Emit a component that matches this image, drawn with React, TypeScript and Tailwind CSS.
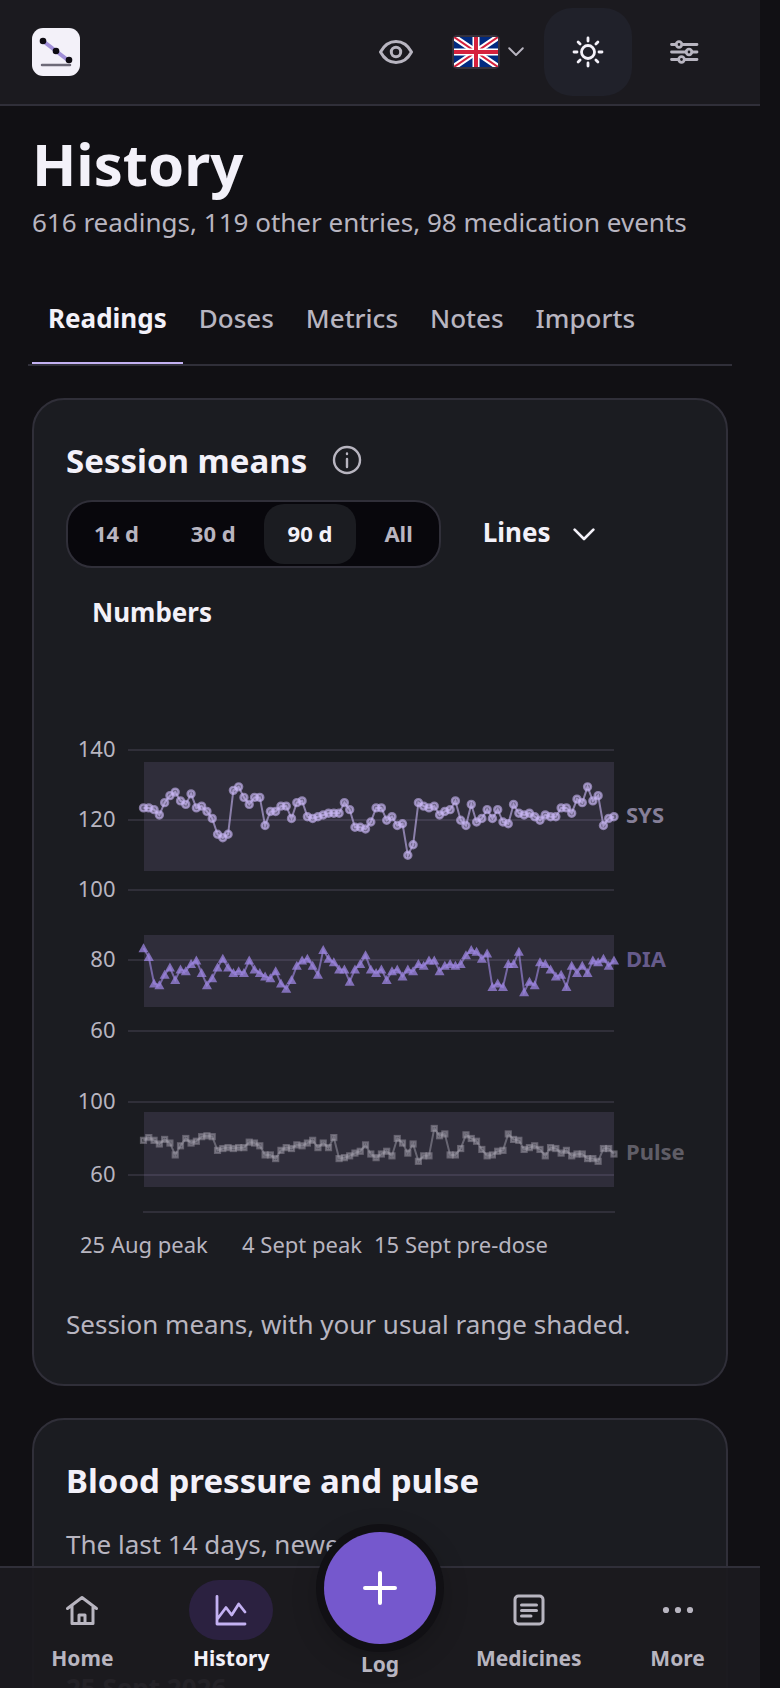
import { useState } from "react";
import type { ReactNode } from "react";

const sys = [
  123.5, 123.5, 123, 121.5, 125, 127, 128, 125.5, 124.5, 127.5, 123.5, 124, 122.5, 120.5, 116,
  115, 116, 128.5, 129.5, 126.5, 124.5, 126.5, 126.5, 118.5, 122.5, 122.5, 124, 124, 120.5, 125,
  125.5, 121, 120.5, 121, 121.5, 122, 122, 122, 125, 123, 118, 118, 117.5, 119.5, 123.5,
  123.5, 120, 121, 118.5, 119, 110, 113, 125, 124, 123.5, 124, 121.5, 122.5, 123, 125.5,
  120, 118.5, 124.5, 119.5, 120.5, 123, 120.5, 123, 119.5, 119, 124.5, 122, 121.5, 122, 121,
  120, 121.5, 121, 121, 123.5, 123.5, 122, 126, 125, 129.5, 125.5, 127, 118.5, 120.5, 121,
];

const dia = [
  83.5, 81, 73.5, 73, 76, 78, 74.5, 77.5, 77, 79, 80, 76.5, 73, 75, 78,
  80.5, 78, 76.5, 77, 76.5, 80, 77.5, 76.5, 75.5, 75, 77, 73.5, 72, 74.5, 78.5,
  80, 80.5, 78.5, 76, 83, 80.5, 79.5, 77.5, 77.5, 74, 77.5, 79, 81.5, 77.5, 76.5,
  77.5, 74.5, 77, 77.5, 75.5, 77.5, 77, 79, 78.5, 80, 80, 77, 78.5, 79, 78.5,
  79, 81.5, 83, 82.5, 80.5, 82, 72.5, 73.5, 72.5, 79, 79, 82.5, 71, 74, 73,
  79.5, 79, 77.5, 75.5, 76, 72.5, 78.5, 76.5, 78.5, 76.5, 80, 79.5, 80.5, 78.5, 80,
];

const pulse = [
  79, 80.5, 79, 77, 79.5, 77.5, 71, 76, 80, 77.5, 78.5, 81, 81.5, 81, 73.5,
  74.5, 75, 74.5, 75, 75, 78, 77.5, 76, 71, 71, 69, 73.5, 75, 74.5, 76.5,
  76, 77.5, 79, 75, 77.5, 75, 80.5, 69, 69.5, 70.5, 72, 73, 76.5, 71.5, 69.5,
  71.5, 73, 70.5, 80, 77.5, 72, 77, 67.5, 70.5, 70.5, 85.5, 81.5, 82.5, 71, 71,
  74.5, 82, 80, 78.5, 74, 70.5, 71, 73, 73.5, 82.5, 79.5, 79, 74, 75, 76,
  74, 70.5, 75, 74.5, 72, 73.5, 70.5, 71.5, 71.5, 69, 69, 67.5, 74.5, 74.5, 71.5,
];

const LEFT = 77.5;
const RIGHT = 548;

const xAt = (i: number) => LEFT + (i * (RIGHT - LEFT)) / 89;
const pressureY = (v: number) => 82 + (140 - v) * 3.51;
const pulseY = (v: number) => 434 + (100 - v) * 1.825;

const toPoints = (values: number[], y: (v: number) => number) =>
  values.map((v, i) => `${xAt(i)},${y(v)}`).join(" ");

const gridLines = [
  { label: "140", y: 82 },
  { label: "120", y: 152 },
  { label: "100", y: 222 },
  { label: "80", y: 292 },
  { label: "60", y: 363 },
  { label: "100", y: 434 },
  { label: "60", y: 507 },
];

const bands = [
  { y: 94, height: 109 },
  { y: 267, height: 72 },
  { y: 444, height: 75 },
];

function SessionChart() {
  return (
    <svg
      viewBox="0 0 628 612"
      className="mt-6 block w-full"
      role="img"
      aria-label="Session means over 90 days"
      fontSize={22}
    >
      {gridLines.map((g, i) => (
        <g key={i}>
          <line x1={62} x2={RIGHT} y1={g.y} y2={g.y} stroke="#302f39" strokeWidth={2} />
          <text x={49.5} y={g.y + 7} textAnchor="end" fill="#b8b5c0">
            {g.label}
          </text>
        </g>
      ))}
      {bands.map((b) => (
        <rect key={b.y} x={78} y={b.y} width={470} height={b.height} fill="#b9a0e8" fillOpacity={0.13} />
      ))}
      <line x1={77} x2={549} y1={544} y2={544} stroke="#302f39" strokeWidth={2} />

      <polyline points={toPoints(sys, pressureY)} fill="none" stroke="#c9b8f5" strokeWidth={2} opacity={0.6} />
      {sys.map((v, i) => (
        <circle
          key={i}
          cx={xAt(i)}
          cy={pressureY(v)}
          r={3.5}
          fill="#c9b8f5"
          fillOpacity={0.45}
          stroke="#c9b8f5"
          strokeWidth={2.4}
          strokeOpacity={0.6}
        />
      ))}

      <polyline points={toPoints(dia, pressureY)} fill="none" stroke="#9480d2" strokeWidth={2} opacity={0.7} />
      {dia.map((v, i) => {
        const x = xAt(i);
        const y = pressureY(v);
        return (
          <path key={i} d={`M${x} ${y - 5}L${x + 5} ${y + 4}H${x - 5}Z`} fill="#9d86e2" fillOpacity={0.75} />
        );
      })}

      <polyline points={toPoints(pulse, pulseY)} fill="none" stroke="#a29fab" strokeWidth={2} opacity={0.5} />
      {pulse.map((v, i) => (
        <rect
          key={i}
          x={xAt(i) - 2.5}
          y={pulseY(v) - 2.5}
          width={5}
          height={5}
          fill="#a29fab"
          fillOpacity={0.3}
          stroke="#a29fab"
          strokeWidth={2.2}
          strokeOpacity={0.48}
        />
      ))}

      <g fontWeight={700}>
        <text x={560} y={155} fill="#857f98">SYS</text>
        <text x={560} y={299} fill="#665b8b">DIA</text>
        <text x={560} y={492} fill="#5f5d66">Pulse</text>
      </g>
      <g fill="#b8b5c0">
        <text x={14} y={585}>25 Aug peak</text>
        <text x={176} y={585}>4 Sept peak</text>
        <text x={308} y={585}>15 Sept pre-dose</text>
      </g>
    </svg>
  );
}

function Logo() {
  return (
    <svg viewBox="0 0 48 48" className="size-12" aria-hidden="true">
      <rect width="48" height="48" rx="11" fill="#f3f1f9" />
      <path d="M11 13 24 23 37 33" stroke="#a08fd8" strokeWidth="4" fill="none" />
      <path d="M10 37h28" stroke="#6d6a78" strokeWidth="2.5" strokeLinecap="round" />
      <circle cx="11" cy="13" r="3.3" fill="#0d0b12" />
      <circle cx="24" cy="23" r="3.3" fill="#0d0b12" />
      <circle cx="37" cy="32" r="3.3" fill="#0d0b12" />
    </svg>
  );
}

function Flag() {
  return (
    <svg viewBox="0 0 48 34" className="h-[34px] w-12" aria-hidden="true">
      <rect width="48" height="34" rx="5" fill="#34313c" />
      <svg x="2" y="2" width="44" height="30" viewBox="0 0 44 30">
        <rect width="44" height="30" rx="2" fill="#012a80" />
        <path d="M0 0 44 30M44 0 0 30" stroke="#fff" strokeWidth="6" />
        <path d="M0 0 44 30M44 0 0 30" stroke="#d5213d" strokeWidth="2" />
        <path d="M22 0V30M0 15H44" stroke="#fff" strokeWidth="7" />
        <path d="M22 0V30M0 15H44" stroke="#d5213d" strokeWidth="4" />
      </svg>
    </svg>
  );
}

function Icon({ children, width = 3 }: { children: ReactNode; width?: number }) {
  return (
    <svg
      viewBox="0 0 40 40"
      className="size-10 shrink-0"
      fill="none"
      stroke="currentColor"
      strokeWidth={width}
      strokeLinecap="round"
      strokeLinejoin="round"
      aria-hidden="true"
    >
      {children}
    </svg>
  );
}

function Chevron({ className }: { className: string }) {
  return (
    <svg
      viewBox="0 0 20 12"
      className={className}
      fill="none"
      stroke="currentColor"
      strokeWidth="2.4"
      strokeLinecap="round"
      strokeLinejoin="round"
      aria-hidden="true"
    >
      <path d="m1.5 1.5 8.5 8.5 8.5-8.5" />
    </svg>
  );
}

const HomeIcon = () => (
  <Icon>
    <path d="M5.5 18.5 20 7.5l14.5 11M10 16v17.5h21V16M17 33.5V25h6v8.5" />
  </Icon>
);

const HistoryIcon = () => (
  <Icon width={2.8}>
    <path d="M6 6.5v27.5h28M6 29.5l9-12 5.7 7.5 7-11 6.3 8" />
  </Icon>
);

const MedicinesIcon = () => (
  <Icon>
    <rect x="6" y="6" width="28" height="28" rx="3.5" />
    <path d="M12.5 15h15M12.5 20.5h15M12.5 26h9.5" />
  </Icon>
);

const MoreIcon = () => (
  <Icon>
    <g fill="currentColor" stroke="none">
      <circle cx="8" cy="20" r="3.1" />
      <circle cx="20" cy="20" r="3.1" />
      <circle cx="32" cy="20" r="3.1" />
    </g>
  </Icon>
);

function NavItem({ label, icon, active }: { label: string; icon: ReactNode; active?: boolean }) {
  return (
    <a
      href="#"
      aria-current={active ? "page" : undefined}
      className={`flex flex-1 flex-col items-center ${active ? "text-[#f3f1f9]" : "text-[#b8b5c0]"}`}
    >
      <span
        className={`flex h-[60px] w-[84px] items-center justify-center rounded-full ${active ? "bg-[#2b2140] text-[#c3b1f2]" : ""}`}
      >
        {icon}
      </span>
      <span className="mt-1 text-[21px] leading-7 font-bold">{label}</span>
    </a>
  );
}

const tabs = ["Readings", "Doses", "Metrics", "Notes", "Imports"];
const ranges = ["14 d", "30 d", "90 d", "All"];

export default function App() {
  const [tab, setTab] = useState("Readings");
  const [range, setRange] = useState("90 d");

  return (
    <div className="relative flex h-screen flex-col overflow-hidden bg-[#111014] pr-5 font-['Noto_Sans',sans-serif] text-[#f3f1f9]">
      <header className="flex shrink-0 items-center justify-between border-b-2 border-[#302f39] bg-[#1b1a1f] px-8 py-2">
        <a href="#" aria-label="Home page">
          <Logo />
        </a>
        <div className="flex gap-2 text-[#b8b5c0]">
          <button aria-label="Hide values" className="flex size-[88px] items-center justify-center">
            <Icon>
              <path d="M4.5 20C8.5 12.500 13.500 9.500 20 9.500s11.500 3 15.500 10.500c-4 7.500-9 10.500-15.500 10.500S8.500 27.500 4.500 20Z" />
              <circle cx="20" cy="20" r="4.7" />
            </Icon>
          </button>
          <button aria-label="Language" className="flex h-[88px] w-[88px] items-center gap-2 pl-1">
            <Flag />
            <Chevron className="w-4" />
          </button>
          <button
            aria-label="Light theme"
            className="flex size-[88px] items-center justify-center rounded-[28px] bg-[#20212a] text-[#f3f1f9]"
          >
            <Icon width={2.8}>
              <circle cx="20" cy="20" r="6.5" />
              <path d="M20 6v3M20 31v3M6 20h3M31 20h3M10.1 10.1l2 2M27.9 27.9l2 2M10.1 29.9l2-2M27.9 12.1l2-2" />
            </Icon>
          </button>
          <button aria-label="Settings" className="flex size-[88px] items-center justify-center">
            <Icon width={2.8}>
              <path d="M7.5 12.5h4.5M18 12.5h15M7.5 20h14.5M28 20h5M7.5 27.5h7M20.5 27.5h12.5" />
              <circle cx="15" cy="12.5" r="2.8" />
              <circle cx="25" cy="20" r="2.8" />
              <circle cx="17.5" cy="27.5" r="2.8" />
            </Icon>
          </button>
        </div>
      </header>

      <main className="flex-1 overflow-y-auto px-8 pt-5 [scrollbar-width:none]">
        <h1 className="text-[58px] leading-[76px] font-bold">History</h1>
        <p className="text-[26px] leading-10 text-[#b8b5c0]">
          616 readings, 119 other entries, 98 medication events
        </p>

        <div role="tablist" className="-mx-1 mt-[34px] flex border-b-2 border-[#302f39] px-1">
          {tabs.map((t) => (
            <button
              key={t}
              role="tab"
              aria-selected={t === tab}
              onClick={() => setTab(t)}
              className={`h-[88px] border-b-2 px-4 pb-0.5 text-[26px] ${
                t === tab
                  ? "border-[#c3b1f2] font-bold text-[#f3f1f9]"
                  : "border-transparent font-medium text-[#b8b5c0]"
              }`}
            >
              {t}
            </button>
          ))}
        </div>

        <section className="mt-8 rounded-[32px] border-2 border-[#302f39] bg-[#1b1c21] px-8 pt-8 pb-10">
          <div className="flex items-center gap-5">
            <h2 className="text-[33px] leading-[58px] font-bold">Session means</h2>
            <button aria-label="About session means" className="text-[#b8b5c0]">
              <Icon width={2.4}>
                <circle cx="20" cy="19" r="13" />
                <path d="M20 18v8M20 12.5v.5" />
              </Icon>
            </button>
          </div>

          <div className="mt-2.5 flex flex-wrap items-start gap-x-4 gap-y-3">
            <div className="flex gap-1 rounded-[26px] border-2 border-[#302f39] bg-[#08070c] p-0.5">
              {ranges.map((r) => (
                <button
                  key={r}
                  aria-pressed={r === range}
                  onClick={() => setRange(r)}
                  className={`h-[60px] rounded-[20px] px-6 pb-0.5 text-[22px] font-bold ${
                    r === range ? "bg-[#1b1c21] text-[#f3f1f9]" : "text-[#b8b5c0]"
                  }`}
                >
                  {r}
                </button>
              ))}
            </div>
            <div className="relative flex items-center">
              <select
                aria-label="Chart style"
                className="h-16 appearance-none bg-transparent pr-[72px] pl-[26px] text-[26px] font-bold"
              >
                <option>Lines</option>
                <option>Dots</option>
              </select>
              <Chevron className="pointer-events-none absolute right-7 mt-1.5 w-[22px]" />
            </div>
            <div className="w-full">
              <button className="h-16 px-[26px] text-[26px] font-bold">Numbers</button>
            </div>
          </div>

          <SessionChart />

          <p className="mt-6 text-[26px] leading-10 text-[#b8b5c0]">
            Session means, with your usual range shaded.
          </p>
        </section>

        <section className="mt-8 rounded-[32px] border-2 border-[#302f39] bg-[#1b1c21] p-8">
          <h2 className="text-[33px] leading-[58px] font-bold">Blood pressure and pulse</h2>
          <p className="mt-3.5 text-[26px] leading-10 text-[#b8b5c0]">The last 14 days, newest first.</p>
          <h3 className="mt-26 text-[26px] leading-10 font-bold text-[#b8b5c0]">25 Sept 2026</h3>
        </section>
      </main>

      {/* bottom bar floats over the scrolling content */}
      <nav className="absolute right-5 bottom-0 left-0 flex items-start border-t-2 border-[#302f39] bg-[#1b1a1f]/95 px-2 pt-3 pb-2.5">
        <NavItem label="Home" icon={<HomeIcon />} />
        <NavItem label="History" icon={<HistoryIcon />} active />
        <div className="flex flex-1 flex-col items-center text-[#b8b5c0]">
          <button
            id="log"
            className="-mt-12 flex size-28 items-center justify-center rounded-full bg-[#7558cd] text-white shadow-[0_8px_32px_rgba(0,0,0,0.3)] ring-8 ring-[#111014]"
          >
            <Icon width={4}>
              <path d="M20 5v30M5 20h30" />
            </Icon>
          </button>
          <label htmlFor="log" className="mt-1.5 text-[21px] leading-7 font-bold">
            Log
          </label>
        </div>
        <NavItem label="Medicines" icon={<MedicinesIcon />} />
        <NavItem label="More" icon={<MoreIcon />} />
      </nav>
    </div>
  );
}
